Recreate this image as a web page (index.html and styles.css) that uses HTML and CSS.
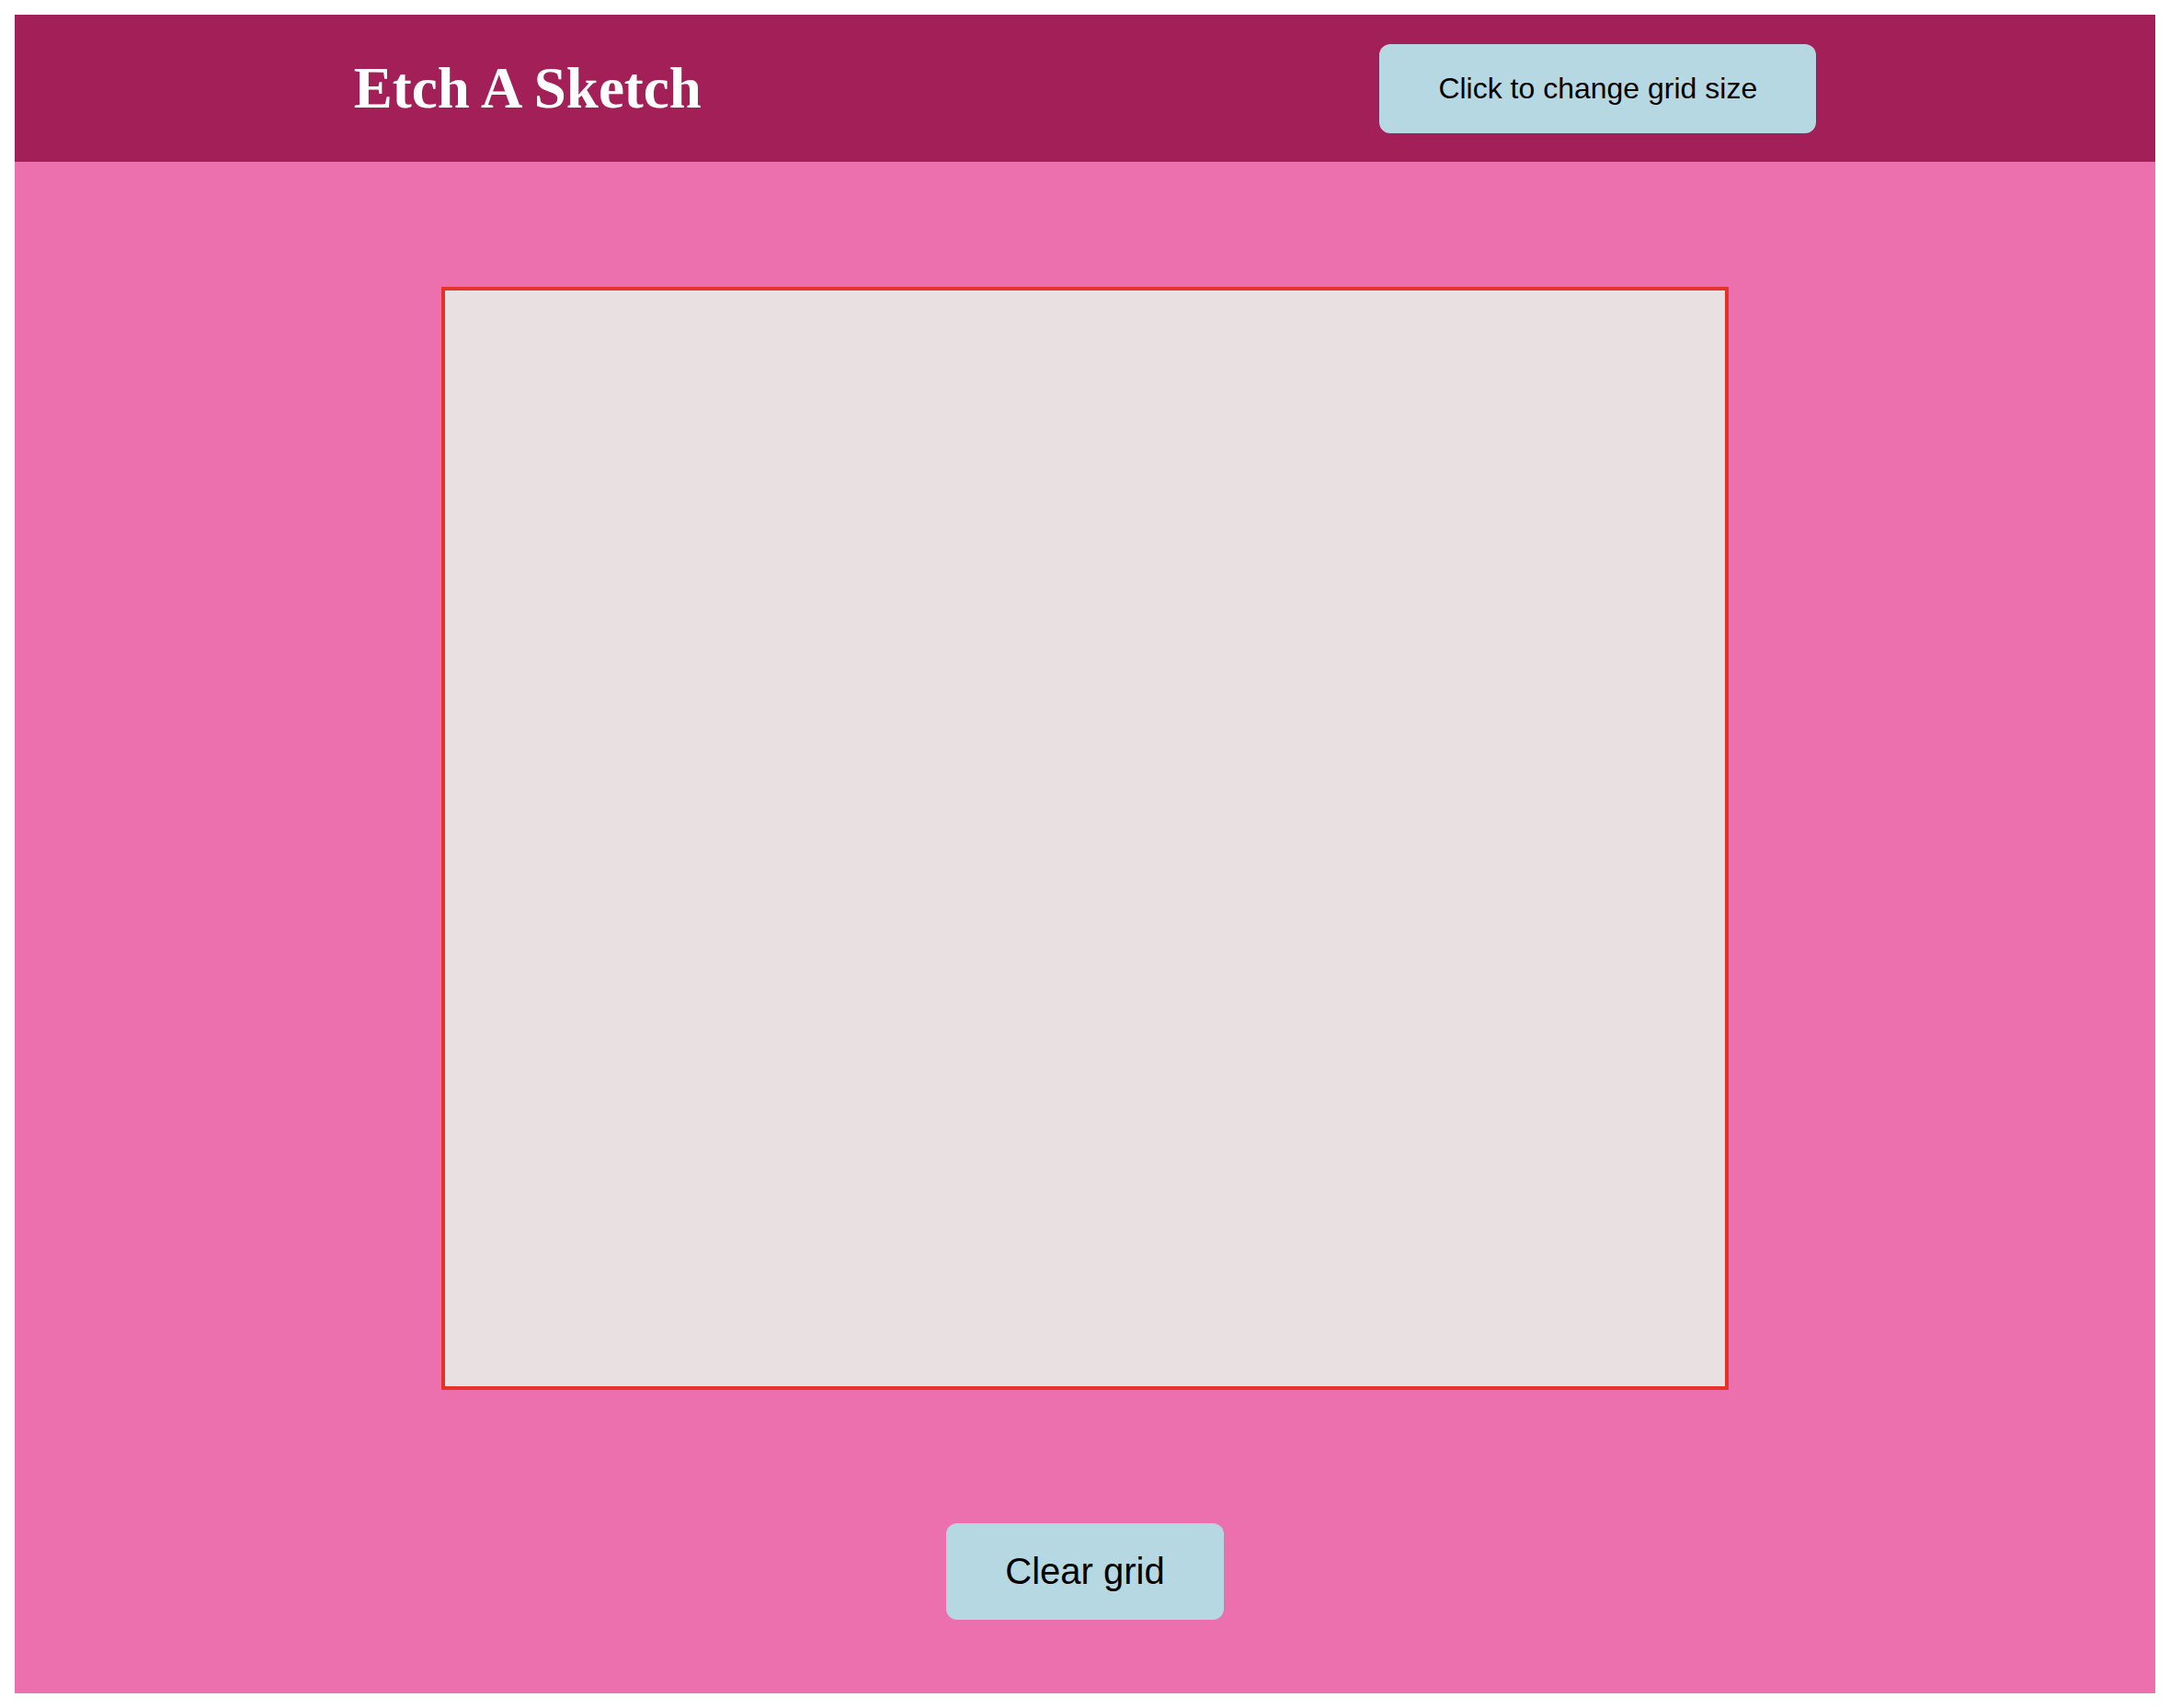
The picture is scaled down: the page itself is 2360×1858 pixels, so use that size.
FILE: index.html
```
<!DOCTYPE html>
<html lang="en">
<head>
<meta charset="utf-8">
<title>Etch A Sketch</title>
<link rel="stylesheet" href="styles.css">
</head>
<body>
<div class="page">
  <header class="topbar">
    <h1 class="title">Etch A Sketch</h1>
    <button class="btn btn-size">Click to change grid size</button>
  </header>
  <main class="board">
    <div class="grid"></div>
    <button class="btn btn-clear">Clear grid</button>
  </main>
</div>
</body>
</html>
```
FILE: styles.css
```
* { box-sizing: border-box; }
html, body { background: #ffffff; }
body {
  margin: 16px;
  font-family: "Liberation Sans", Arial, sans-serif;
}
.page {
  height: 1826px;
  display: flex;
  flex-direction: column;
  background: #ec70ae;
}
.topbar {
  height: 160px;
  flex: none;
  background: #a21f57;
  display: flex;
  align-items: center;
  justify-content: space-around;
}
.title {
  margin: 0;
  font-family: "Liberation Serif", "Times New Roman", serif;
  font-weight: 700;
  font-size: 63px;
  color: #ffffff;
  line-height: 1.15;
}
.btn {
  border: none;
  background: #b6d8e3;
  color: #000000;
  font-family: "Liberation Sans", Arial, sans-serif;
  padding: 30px 64px;
  border-radius: 12px;
  line-height: normal;
}
.btn-size { font-size: 32px; }
.btn-clear { font-size: 40px; }
.board {
  flex: 1;
  display: flex;
  flex-direction: column;
  align-items: center;
  padding-top: 136px;
  gap: 145px;
}
.grid {
  width: 1400px;
  height: 1200px;
  background: #e9e0e1;
  border: 4px solid #e5332a;
}
```
